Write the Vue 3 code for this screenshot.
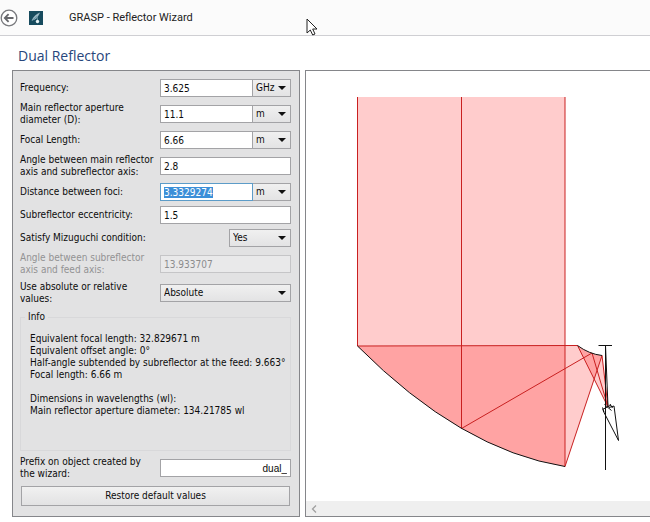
<script setup>
import { onMounted, ref } from 'vue'

const rows = ref([
  { id: 'frequency', label: 'Frequency:', value: '3.625', unit: 'GHz', units: ['GHz', 'MHz', 'kHz'] },
  { id: 'aperture', label: 'Main reflector aperture diameter (D):', value: '11.1', unit: 'm', units: ['m', 'cm', 'mm'] },
  { id: 'focal', label: 'Focal Length:', value: '6.66', unit: 'm', units: ['m', 'cm', 'mm'] },
  { id: 'axis-angle', label: 'Angle between main reflector axis and subreflector axis:', value: '2.8' },
  { id: 'foci', label: 'Distance between foci:', value: '3.3329274', unit: 'm', units: ['m', 'cm', 'mm'] },
  { id: 'eccentricity', label: 'Subreflector eccentricity:', value: '1.5' },
  { id: 'mizuguchi', label: 'Satisfy Mizuguchi condition:', choice: 'Yes', choices: ['Yes', 'No'], narrow: true },
  { id: 'feed-angle', label: 'Angle between subreflector axis and feed axis:', value: '13.933707', disabled: true },
  { id: 'mode', label: 'Use absolute or relative values:', choice: 'Absolute', choices: ['Absolute', 'Relative'] },
])
const prefix = ref('dual_')
const form = ref(null)

onMounted(() => {
  const field = form.value.querySelector('#foci')
  field.focus()
  field.select()
})
</script>

<template>
  <div class="wizard">
    <header class="titlebar">
      <button class="back" type="button" aria-label="Back">
        <svg viewBox="0 0 18 18" width="18" height="18">
          <circle cx="9" cy="9" r="7.8" fill="#fff" stroke="#77787c" stroke-width="1.3" />
          <path d="M13.5 9H5M8.6 5.2L4.8 9l3.8 3.8" fill="none" stroke="#66676b" stroke-width="1.8" />
        </svg>
      </button>
      <svg class="logo" viewBox="0 0 14 14" width="14" height="14">
        <rect width="14" height="14" fill="#174b5e" />
        <path d="M11 1.5C7.5 3 4.5 5.5 2.5 9.5C6 9.5 9 6.5 11 1.5Z" fill="#9fbcc8" />
        <path d="M3 9.5L8 5.5L8.5 9" fill="none" stroke="#6d97a7" stroke-width="1" />
        <circle cx="8.5" cy="10.5" r="1.7" fill="#e8f3f6" />
      </svg>
      <h1>GRASP - Reflector Wizard</h1>
      <svg class="pointer" viewBox="0 0 12 18" width="12" height="18">
        <path d="M1 1V15L4.3 12L6.7 17L9 16L6.7 11H11Z" fill="#fff" stroke="#222" stroke-width="1" />
      </svg>
    </header>

    <h2>Dual Reflector</h2>

    <main class="content">
      <form ref="form" class="panel" @submit.prevent>
        <div v-for="row in rows" :key="row.id" class="row" :class="{ disabled: row.disabled }">
          <label :for="row.id">{{ row.label }}</label>
          <div class="control">
            <input
              v-if="row.value !== undefined"
              :id="row.id"
              v-model="row.value"
              type="text"
              :disabled="row.disabled"
            />
            <span v-if="row.units" class="combo unit">
              <select v-model="row.unit" :aria-label="row.label + ' unit'">
                <option v-for="u in row.units" :key="u">{{ u }}</option>
              </select>
            </span>
            <span v-if="row.choices" class="combo" :class="row.narrow ? 'narrow' : 'wide'">
              <select :id="row.id" v-model="row.choice">
                <option v-for="c in row.choices" :key="c">{{ c }}</option>
              </select>
            </span>
          </div>
        </div>

        <section class="info">
          <h3>Info</h3>
          <div class="info-body">
            <p>Equivalent focal length: 32.829671 m</p>
            <p>Equivalent offset angle: 0°</p>
            <p>Half-angle subtended by subreflector at the feed: 9.663°</p>
            <p>Focal length: 6.66 m</p>
            <p class="section-start">Dimensions in wavelengths (wl):</p>
            <p>Main reflector aperture diameter: 134.21785 wl</p>
          </div>
        </section>

        <div class="row">
          <label for="prefix">Prefix on object created by the wizard:</label>
          <div class="control">
            <input id="prefix" v-model="prefix" class="prefix" type="text" />
          </div>
        </div>
        <button class="restore" type="button">Restore default values</button>
      </form>

      <section class="view">
        <svg class="plot" viewBox="306 71 344 429" preserveAspectRatio="xMinYMin meet" role="img" aria-label="Ray diagram">
          <g fill="#f00" fill-opacity="0.2">
            <path d="M357.5 97H565V466.5Q461 450 357.5 346Z" />
            <path d="M357.5 346Q461 450 565 466.5L602 355.5Q589 354 577.5 345.5Z" />
            <path d="M577.5 345.5Q589 354 602 355.5L608 407Z" />
          </g>
          <g fill="none" stroke="#c92020" stroke-width="1">
            <path d="M357.5 97V346L577.5 345.5L608 407" />
            <path d="M461.5 97V428.5L592 353L608 407" />
            <path d="M565 97V466.5L602 355.5L608 407" />
          </g>
          <g fill="none" stroke="#111" stroke-width="1">
            <path d="M357.5 346Q461 450 565 466.5" />
            <path d="M577.5 345.5Q589 354 602 355.5" />
            <path d="M598.5 345.5H612M605.5 345.5V470M605.5 345.5L608 407" />
            <path d="M603 410.5L618.5 440.5L614 406L609 407.5" />
            <path d="M602.5 409.5L611 405M604.5 404.5L611.5 410.5M602.5 407.5L604 412M610 404L612.5 408" />
          </g>
        </svg>
        <div class="scrollbar">
          <button type="button" aria-label="Scroll left">
            <svg viewBox="0 0 6 8" width="6" height="8">
              <path d="M5 0.5L1.5 4L5 7.5" fill="none" stroke="#a0a0a0" stroke-width="1.3" />
            </svg>
          </button>
        </div>
      </section>
    </main>
  </div>
</template>

<style>
body {
  margin: 0;
  background: #fff;
}
</style>

<style scoped>
* {
  box-sizing: border-box;
}
.wizard {
  font: 10px/12px "DejaVu Sans Condensed", "DejaVu Sans", sans-serif;
  color: #0c0c0c;
  padding-bottom: 6px;
  overflow: hidden;
}
.titlebar {
  position: relative;
  display: flex;
  align-items: center;
  height: 36px;
  background: #fbfbfb;
  border-bottom: 1px solid #cfcfd3;
}
.back {
  display: flex;
  padding: 0;
  border: 0;
  background: none;
}
.logo {
  margin-left: 11px;
}
h1 {
  margin: 0 0 0 26px;
  font: 11px/16px Roboto, "Open Sans", sans-serif;
  color: #222;
}
.pointer {
  position: absolute;
  left: 306px;
  top: 18px;
}
h2 {
  margin: 0;
  padding: 10px 18px 4px;
  font: 14px/20px "Open Sans", "Noto Sans", sans-serif;
  color: #27467c;
}
.content {
  display: grid;
  grid-template-columns: 288px minmax(0, 1fr);
  gap: 5px;
  padding-left: 12px;
}
.panel {
  display: flex;
  flex-direction: column;
  gap: 5px;
  padding: 8px 8px 10px 7px;
  border: 1px solid #85868a;
  background: #e2e2e3;
}
.row {
  display: grid;
  grid-template-columns: 140px minmax(0, 1fr);
  align-items: center;
}
.row label {
  padding-right: 4px;
}
.control {
  display: flex;
  justify-content: flex-end;
}
.disabled label {
  color: #929293;
}
input,
select {
  font: inherit;
  color: inherit;
  border: 1px solid #a3a3a6;
  border-radius: 0;
  height: 18px;
  outline: none;
}
input {
  flex: 1;
  width: 100%;
  min-width: 0;
  padding: 0 3px;
  line-height: 16px;
  background: #fff;
}
input:focus {
  border-color: #5c9cc8;
}
input::selection {
  background: #3c8fd8;
  color: #fff;
}
input:disabled {
  color: #8c8c8d;
  border-color: #c5c5c7;
  background: #e9e9ea;
}
.prefix {
  font-family: "Liberation Sans", sans-serif;
  text-align: right;
}
.combo {
  position: relative;
  display: flex;
}
.combo::after {
  content: "";
  position: absolute;
  right: 5px;
  top: 7px;
  border: 4px solid transparent;
  border-top-color: #111;
  border-bottom: 0;
  pointer-events: none;
}
.combo select {
  width: 100%;
  appearance: none;
  padding: 0 14px 0 3px;
  background: linear-gradient(#f0f0f0, #e3e3e4);
}
.unit {
  flex: none;
  width: 38px;
}
.combo.unit select {
  padding-right: 0;
  border-left: 0;
}
.narrow {
  width: 62px;
}
.wide {
  flex: 1;
}
.info {
  height: 141px;
  display: flex;
  flex-direction: column;
}
.info h3 {
  margin: 0 0 -6px 5px;
  padding: 0 3px;
  align-self: flex-start;
  background: #e2e2e3;
  font: inherit;
  line-height: 13px;
  z-index: 1;
}
.info-body {
  flex: 1;
  padding: 15px 9px 0;
  border: 1px solid #d8d8da;
}
.info p {
  margin: 0;
  white-space: nowrap;
}
.info .section-start {
  margin-top: 12px;
}
.restore {
  height: 20px;
  margin: 1px 1px 0;
  padding: 0;
  border: 1px solid #a3a3a6;
  background: linear-gradient(#f1f1f1, #e2e2e3);
  font: inherit;
  color: inherit;
}
.view {
  display: flex;
  flex-direction: column;
  min-width: 0;
  border: 1px solid #85868a;
  border-right: 0;
}
.plot {
  flex: 1;
  width: 100%;
  min-height: 0;
}
.scrollbar {
  display: flex;
  height: 15px;
  background: #efefef;
}
.scrollbar button {
  display: flex;
  align-items: center;
  padding: 0 5px;
  border: 0;
  background: none;
}
</style>
